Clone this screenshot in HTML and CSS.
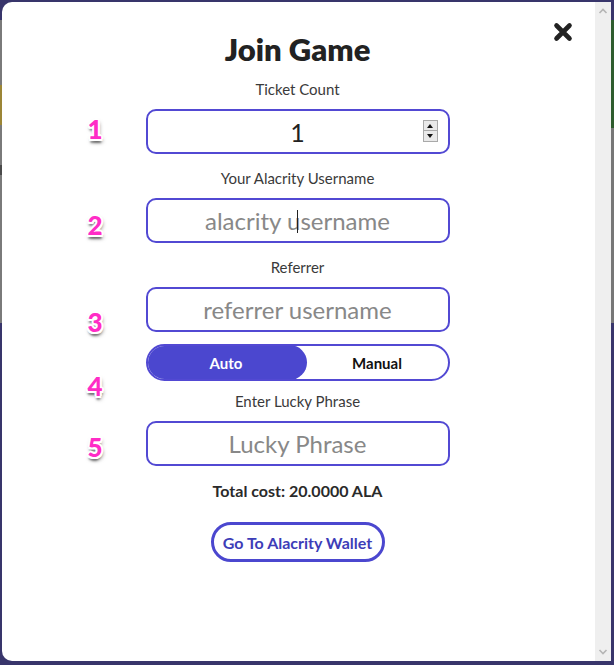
FILE: index.html
```html
<!DOCTYPE html>
<html lang="en">
<head>
<meta charset="utf-8">
<title>Join Game</title>
<link rel="stylesheet" href="styles.css">
</head>
<body>
<div class="modal">
  <div class="content">
    <button class="close" aria-label="Close">
      <svg width="20" height="20" viewBox="0 0 20 20"><path d="M3.5 3.5 L16.5 16.5 M16.5 3.5 L3.5 16.5" stroke="#222" stroke-width="4.6" stroke-linecap="round" fill="none"/></svg>
    </button>

    <span class="mark m1">1</span>
    <span class="mark m2">2</span>
    <span class="mark m3">3</span>
    <span class="mark m4">4</span>
    <span class="mark m5">5</span>

    <div class="form">
      <h1 class="title">Join Game</h1>

      <div class="label first">Ticket Count</div>
      <div class="field">
        <input class="input value" type="text" value="1" readonly>
        <span class="spin"><span class="spin-btn"><span class="tri up"></span></span><span class="spin-btn"><span class="tri down"></span></span></span>
      </div>

      <div class="label">Your Alacrity Username</div>
      <div class="field">
        <input class="input" type="text" placeholder="alacrity username">
        <span class="caret"></span>
      </div>

      <div class="label">Referrer</div>
      <div class="field">
        <input class="input" type="text" placeholder="referrer username">
      </div>

      <div class="toggle">
        <span class="seg active">Auto</span>
        <span class="seg">Manual</span>
      </div>

      <div class="label after-toggle">Enter Lucky Phrase</div>
      <div class="field">
        <input class="input" type="text" placeholder="Lucky Phrase">
      </div>

      <div class="total">Total cost: 20.0000 ALA</div>

      <button class="wallet">Go To Alacrity Wallet</button>
    </div>
  </div>
  <div class="scrollbar" aria-hidden="true">
    <svg width="16" height="14" viewBox="0 0 16 14"><path d="M4.5 9 L8 5.5 L11.5 9" stroke="#b5b5b5" stroke-width="1.6" fill="none"/></svg>
    <svg width="16" height="14" viewBox="0 0 16 14"><path d="M4.5 5 L8 8.5 L11.5 5" stroke="#b5b5b5" stroke-width="1.6" fill="none"/></svg>
  </div>
</div>
</body>
</html>
```

FILE: styles.css
```css
html {
  height: 100%;
  background:
    linear-gradient(#9c8636, #9c8636) 0 85px / 2px 40px no-repeat,
    linear-gradient(#4a4a4a, #4a4a4a) 0 165px / 2px 10px no-repeat,
    linear-gradient(#7a7a7a, #7a7a7a) 0 20px / 2px 303px no-repeat,
    linear-gradient(#2e5c2d, #2e5c2d) 100% 20px / 3px 108px no-repeat,
    linear-gradient(#777777, #777777) 100% 128px / 3px 195px no-repeat,
    #38356b;
}

body {
  margin: 0;
  font-family: "Lato", "Noto Sans", sans-serif;
  color: #333;
}

.modal {
  display: flex;
  box-sizing: border-box;
  margin: 2px 3px 0 2px;
  height: 659px;
  background: #fff;
  border-radius: 10px 0 0 10px;
  overflow: hidden;
}

.content {
  position: relative;
  flex: 1;
}

.scrollbar {
  flex: 0 0 16px;
  background: #efefef;
  display: flex;
  flex-direction: column;
  justify-content: space-between;
  padding: 2px 0 2px;
}
.scrollbar svg { display: block; }

.close {
  position: absolute;
  top: 20px;
  right: 22px;
  width: 20px;
  height: 20px;
  padding: 0;
  border: 0;
  background: none;
  line-height: 0;
}

.mark {
  position: absolute;
  left: 78px;
  width: 30px;
  text-align: center;
  font-family: "Lato", sans-serif;
  font-weight: 900;
  font-size: 26px;
  line-height: 30px;
  color: #ff2cc6;
  text-shadow:
    -2px 0 #fff, 2px 0 #fff, 0 -2px #fff, 0 2px #fff,
    -1.5px -1.5px #fff, 1.5px 1.5px #fff, 1.5px -1.5px #fff, -1.5px 1.5px #fff,
    0 4px 2px rgba(0, 0, 0, 0.35), 1px 3px 4px rgba(0, 0, 0, 0.6);
}
.m1 { top: 112px; }
.m2 { top: 208px; }
.m3 { top: 305px; }
.m4 { top: 369px; }
.m5 { top: 430px; }

.form {
  width: 304px;
  margin: 0 auto;
  padding-top: 30px;
  display: flex;
  flex-direction: column;
  align-items: stretch;
  transform: translateX(-1px);
}

.title {
  margin: 0;
  text-align: center;
  font-size: 31px;
  line-height: 34px;
  font-weight: 800;
  color: #222;
}

.label {
  margin: 14px 0 10px;
  text-align: center;
  font-size: 15px;
  line-height: 20px;
  color: #3a3a3a;
}
.label.first { margin-top: 13px; }
.label.after-toggle { margin-top: 10px; }

.field {
  position: relative;
}

.input {
  display: block;
  box-sizing: border-box;
  width: 100%;
  height: 45px;
  margin: 0;
  padding: 0 12px;
  border: 2px solid #5249d3;
  border-radius: 10px;
  background: #fff;
  text-align: center;
  font-family: "Lato", "Noto Sans", sans-serif;
  font-size: 24px;
  color: #222;
  outline: none;
}
.input::placeholder {
  color: #888;
}
.input.value {
  font-size: 25px;
}

.caret {
  position: absolute;
  left: 151px;
  top: 12px;
  width: 1px;
  height: 23px;
  background: #222;
}

.spin {
  position: absolute;
  right: 12px;
  top: 11px;
  display: flex;
  flex-direction: column;
  width: 15px;
}
.spin-btn {
  box-sizing: border-box;
  height: 11px;
  border: 1px solid #a9a9a9;
  background: #e9e9e9;
  display: flex;
  align-items: center;
  justify-content: center;
}
.spin-btn + .spin-btn { border-top: 0; }
.tri {
  width: 0;
  height: 0;
  border-left: 3px solid transparent;
  border-right: 3px solid transparent;
}
.tri.up { border-bottom: 4px solid #111; }
.tri.down { border-top: 4px solid #111; }

.toggle {
  margin-top: 12px;
  box-sizing: border-box;
  height: 37px;
  border: 2px solid #5249d3;
  border-radius: 19px;
  display: flex;
  overflow: hidden;
}
.seg {
  flex: 1;
  display: flex;
  align-items: center;
  justify-content: center;
  font-size: 15px;
  font-weight: 700;
  color: #111;
}
.seg.active {
  flex: 0 0 161px;
  margin: -1px 0 -1px -2px;
  border-radius: 19px;
  background: #4b47cf;
  color: #fff;
}

.total {
  margin-top: 15px;
  text-align: center;
  font-size: 16px;
  line-height: 20px;
  font-weight: 700;
  color: #2a2a2a;
}

.wallet {
  align-self: center;
  margin-top: 21px;
  box-sizing: border-box;
  width: 174px;
  height: 40px;
  border: 3px solid #4b47cf;
  border-radius: 20px;
  background: #fff;
  font-family: "Lato", "Noto Sans", sans-serif;
  font-size: 16px;
  font-weight: 700;
  color: #3d3db8;
  padding: 0;
}
```
